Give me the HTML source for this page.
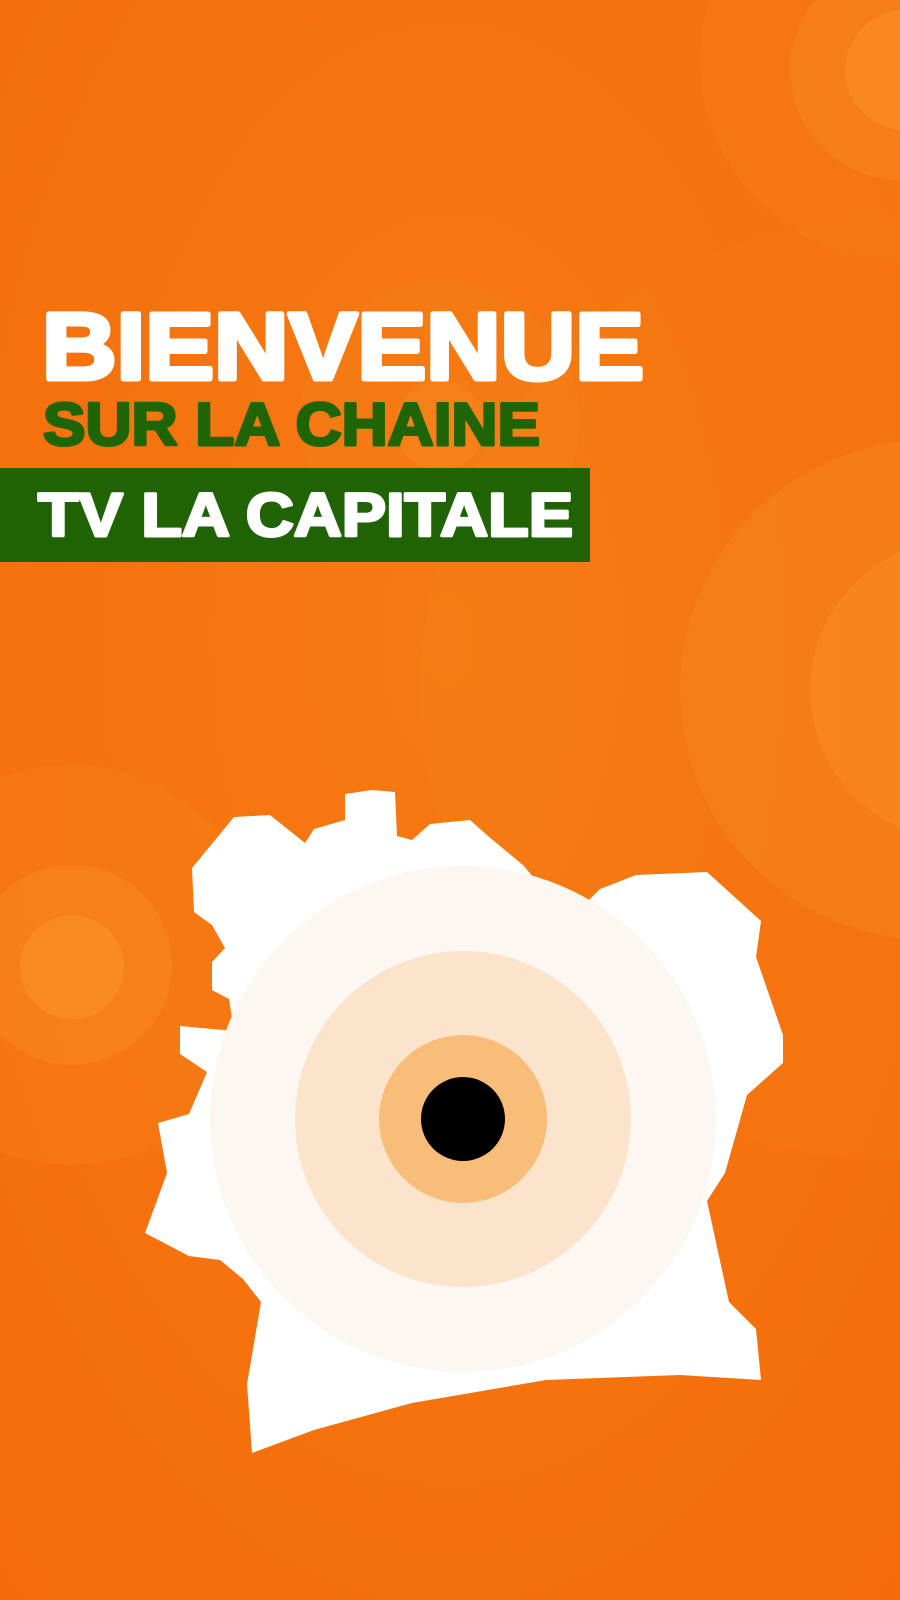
<!DOCTYPE html>
<html><head><meta charset="utf-8"><style>
html,body{margin:0;padding:0;}
body{width:900px;height:1600px;overflow:hidden;background:#f46f0c;}
svg{display:block}
</style></head><body>
<svg width="900" height="1600" viewBox="0 0 900 1600" xmlns="http://www.w3.org/2000/svg">
<defs>
<radialGradient id="bg" cx="0.5" cy="0.4" r="0.8">
<stop offset="0" stop-color="#f67a12"/><stop offset="1" stop-color="#f46c0a"/>
</radialGradient>
</defs>
<rect width="900" height="1600" fill="url(#bg)"/>
<g fill="#fb9a2e">
<circle cx="900" cy="60" r="200" opacity="0.12"/>
<circle cx="900" cy="70" r="110" opacity="0.25"/>
<circle cx="905" cy="70" r="60" opacity="0.35"/>
<circle cx="890" cy="690" r="470" opacity="0.07"/>
<circle cx="930" cy="690" r="250" opacity="0.22"/>
<circle cx="960" cy="690" r="150" opacity="0.3"/>
<circle cx="70" cy="965" r="200" opacity="0.12"/>
<circle cx="72" cy="965" r="100" opacity="0.25"/>
<circle cx="72" cy="967" r="52" opacity="0.4"/>
<circle cx="440" cy="420" r="140" opacity="0.1"/>
<circle cx="440" cy="425" r="45" opacity="0.2"/>
</g>
<text x="42" y="379" font-family="Liberation Sans, sans-serif" font-weight="bold" font-size="95" fill="#fff" stroke="#fff" stroke-width="5" stroke-linejoin="round" textLength="602" lengthAdjust="spacingAndGlyphs">BIENVENUE</text>
<text x="43" y="445" font-family="Liberation Sans, sans-serif" font-weight="bold" font-size="60" fill="#1f6405" stroke="#1f6405" stroke-width="3" stroke-linejoin="round" textLength="497" lengthAdjust="spacingAndGlyphs">SUR LA CHAINE</text>
<rect x="0" y="468" width="590" height="94" fill="#1f6304"/>
<text x="38" y="536" font-family="Liberation Sans, sans-serif" font-weight="bold" font-size="61" fill="#fff" stroke="#fff" stroke-width="3" stroke-linejoin="round" textLength="535" lengthAdjust="spacingAndGlyphs">TV LA CAPITALE</text>
<path fill="#fff" d="M192,868 L234,817 L270,815 L305,843 L314,829 L345,820 L345,794 L372,790 L395,792 L397,836 L412,840 L430,824 L470,820 L488,836 L524,866 L546,893 L587,902 L600,889 L636,875 L707,872 L761,921 L756,957 L783,1035 L783,1063 L747,1095 L738,1127 L725,1173 L707,1201 L729,1302 L756,1329 L761,1380 L680,1375 L546,1380 L412,1403 L314,1430 L252,1453 L247,1384 L261,1302 L243,1279 L220,1260 L189,1256 L145,1233 L167,1173 L158,1123 L189,1114 L207,1072 L180,1054 L180,1026 L234,1031 L229,999 L212,990 L212,962 L225,948 L212,925 L194,912 Z"/>
<circle cx="463" cy="1119" r="253" fill="#fdf7f2"/>
<circle cx="463" cy="1119" r="168" fill="#fce4cc"/>
<circle cx="463" cy="1119" r="84" fill="#f8bd78"/>
<circle cx="463" cy="1119" r="42" fill="#000"/>
</svg>
</body></html>
